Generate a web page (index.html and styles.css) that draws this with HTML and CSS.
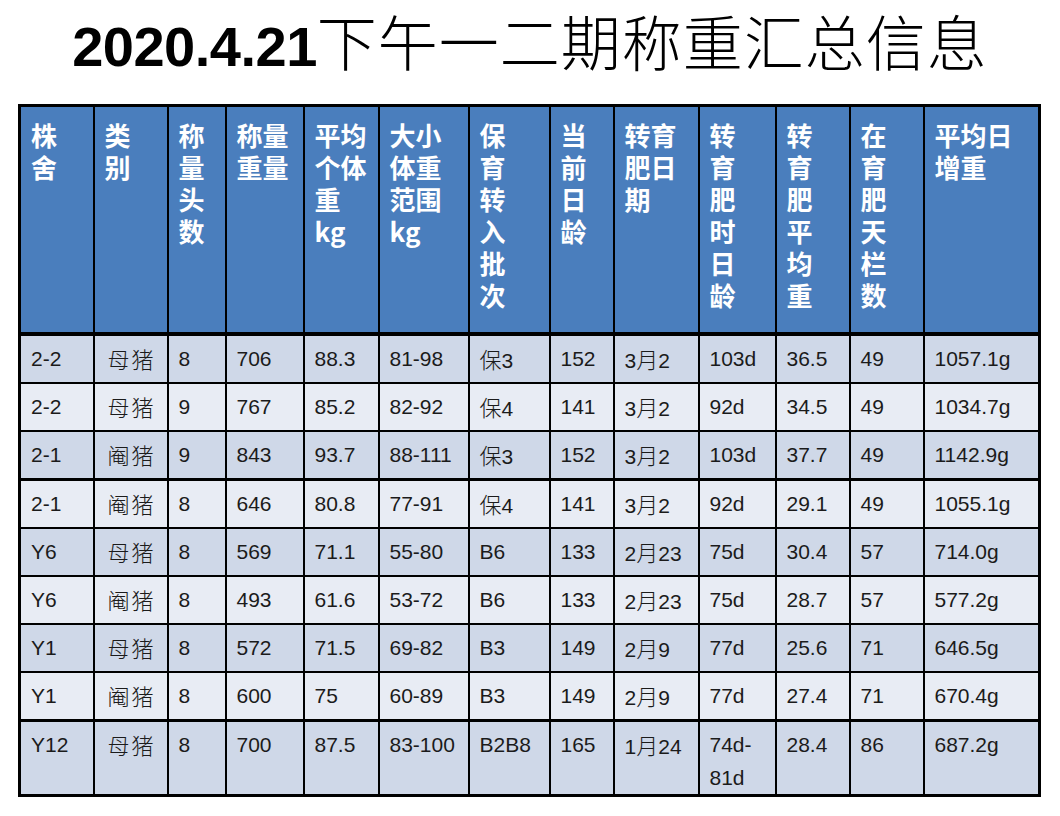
FILE: index.html
```html
<!DOCTYPE html>
<html lang="zh-CN">
<head>
<meta charset="utf-8">
<title>2020.4.21下午一二期称重汇总信息</title>
<link rel="stylesheet" href="styles.css">
</head>
<body>
<div class="slide">
  <h1 class="title"><span class="date">2020.4.21</span><span class="title-cn">下午一二期称重汇总信息</span></h1>
  <table class="grid">
    <colgroup>
      <col class="c1"><col class="c2"><col class="c3"><col class="c4"><col class="c5"><col class="c6"><col class="c7"><col class="c8"><col class="c9"><col class="c10"><col class="c11"><col class="c12"><col class="c13">
    </colgroup>
    <thead>
      <tr class="head">
        <th>株<br>舍</th>
        <th>类<br>别</th>
        <th>称<br>量<br>头<br>数</th>
        <th>称量<br>重量</th>
        <th>平均<br>个体<br>重<br>kg</th>
        <th>大小<br>体重<br>范围<br>kg</th>
        <th>保<br>育<br>转<br>入<br>批<br>次</th>
        <th>当<br>前<br>日<br>龄</th>
        <th>转育<br>肥日<br>期</th>
        <th>转<br>育<br>肥<br>时<br>日<br>龄</th>
        <th>转<br>育<br>肥<br>平<br>均<br>重</th>
        <th>在<br>育<br>肥<br>天<br>栏<br>数</th>
        <th>平均日<br>增重</th>
      </tr>
    </thead>
    <tbody>
      <tr class="dark"><td>2-2</td><td class="cn">母猪</td><td>8</td><td>706</td><td>88.3</td><td>81-98</td><td><span class="cn">保</span>3</td><td>152</td><td>3<span class="cn">月</span>2</td><td>103d</td><td>36.5</td><td>49</td><td>1057.1g</td></tr>
      <tr class="light"><td>2-2</td><td class="cn">母猪</td><td>9</td><td>767</td><td>85.2</td><td>82-92</td><td><span class="cn">保</span>4</td><td>141</td><td>3<span class="cn">月</span>2</td><td>92d</td><td>34.5</td><td>49</td><td>1034.7g</td></tr>
      <tr class="dark"><td>2-1</td><td class="cn">阉猪</td><td>9</td><td>843</td><td>93.7</td><td>88-111</td><td><span class="cn">保</span>3</td><td>152</td><td>3<span class="cn">月</span>2</td><td>103d</td><td>37.7</td><td>49</td><td>1142.9g</td></tr>
      <tr class="light thick"><td>2-1</td><td class="cn">阉猪</td><td>8</td><td>646</td><td>80.8</td><td>77-91</td><td><span class="cn">保</span>4</td><td>141</td><td>3<span class="cn">月</span>2</td><td>92d</td><td>29.1</td><td>49</td><td>1055.1g</td></tr>
      <tr class="dark"><td>Y6</td><td class="cn">母猪</td><td>8</td><td>569</td><td>71.1</td><td>55-80</td><td>B6</td><td>133</td><td>2<span class="cn">月</span>23</td><td>75d</td><td>30.4</td><td>57</td><td>714.0g</td></tr>
      <tr class="light"><td>Y6</td><td class="cn">阉猪</td><td>8</td><td>493</td><td>61.6</td><td>53-72</td><td>B6</td><td>133</td><td>2<span class="cn">月</span>23</td><td>75d</td><td>28.7</td><td>57</td><td>577.2g</td></tr>
      <tr class="dark"><td>Y1</td><td class="cn">母猪</td><td>8</td><td>572</td><td>71.5</td><td>69-82</td><td>B3</td><td>149</td><td>2<span class="cn">月</span>9</td><td>77d</td><td>25.6</td><td>71</td><td>646.5g</td></tr>
      <tr class="light"><td>Y1</td><td class="cn">阉猪</td><td>8</td><td>600</td><td>75</td><td>60-89</td><td>B3</td><td>149</td><td>2<span class="cn">月</span>9</td><td>77d</td><td>27.4</td><td>71</td><td>670.4g</td></tr>
      <tr class="dark thick last"><td>Y12</td><td class="cn">母猪</td><td>8</td><td>700</td><td>87.5</td><td>83-100</td><td>B2B8</td><td>165</td><td>1<span class="cn">月</span>24</td><td>74d-<br>81d</td><td>28.4</td><td>86</td><td>687.2g</td></tr>
    </tbody>
  </table>
</div>
</body>
</html>
```

FILE: styles.css
```css
html, body {
  margin: 0;
  padding: 0;
  background: #ffffff;
}

.slide {
  width: 1060px;
  height: 816px;
  overflow: hidden;
  background: #ffffff;
}

.title {
  margin: 0;
  height: 104px;
  padding: 7px 0 0 0;
  box-sizing: border-box;
  font-weight: normal;
  white-space: nowrap;
  text-align: center;
  line-height: 66px;
  color: #000;
}

.date {
  font-family: "Liberation Sans", Arial, sans-serif;
  font-weight: bold;
  font-size: 56px;
  letter-spacing: -0.5px;
}

.title-cn {
  font-family: "Noto Sans CJK SC", sans-serif;
  font-weight: 300;
  font-size: 60px;
  letter-spacing: 1px;
}

.grid {
  margin-left: 18px;
  border-collapse: collapse;
  table-layout: fixed;
  width: 1020px;
  border: 3px solid #000;
}

.c1 { width: 74px; }
.c2 { width: 74px; }
.c3 { width: 58px; }
.c4 { width: 78px; }
.c5 { width: 75px; }
.c6 { width: 90px; }
.c7 { width: 81px; }
.c8 { width: 64px; }
.c9 { width: 85px; }
.c10 { width: 77px; }
.c11 { width: 74px; }
.c12 { width: 74px; }
.c13 { width: 116px; }

.grid th,
.grid td {
  border: 2px solid #000;
  text-align: left;
  vertical-align: top;
  overflow: hidden;
  white-space: nowrap;
}

.head th {
  height: 213px;
  padding: 12px 6px 0 10px;
  background: #4a7ebd;
  color: #ffffff;
  font-family: "Noto Sans CJK SC", sans-serif;
  font-weight: bold;
  font-size: 26px;
  line-height: 32px;
  border-bottom: 4px solid #000;
}

.grid td {
  height: 40px;
  padding: 6px 4px 0 10px;
  font-family: "Liberation Sans", Arial, sans-serif;
  font-size: 21px;
  line-height: 33px;
  color: #1b1b1b;
}

.grid td.cn,
.grid td .cn {
  font-family: "Noto Sans CJK SC", sans-serif;
  font-weight: 300;
  font-size: 22px;
}

.grid td.cn {
  padding-left: 13px;
  letter-spacing: 2px;
}

.dark td {
  background: #cfd8e8;
}

.light td {
  background: #e8ecf4;
}

.thick td {
  border-top: 3px solid #000;
}

.last td {
  height: 64px;
}
```
